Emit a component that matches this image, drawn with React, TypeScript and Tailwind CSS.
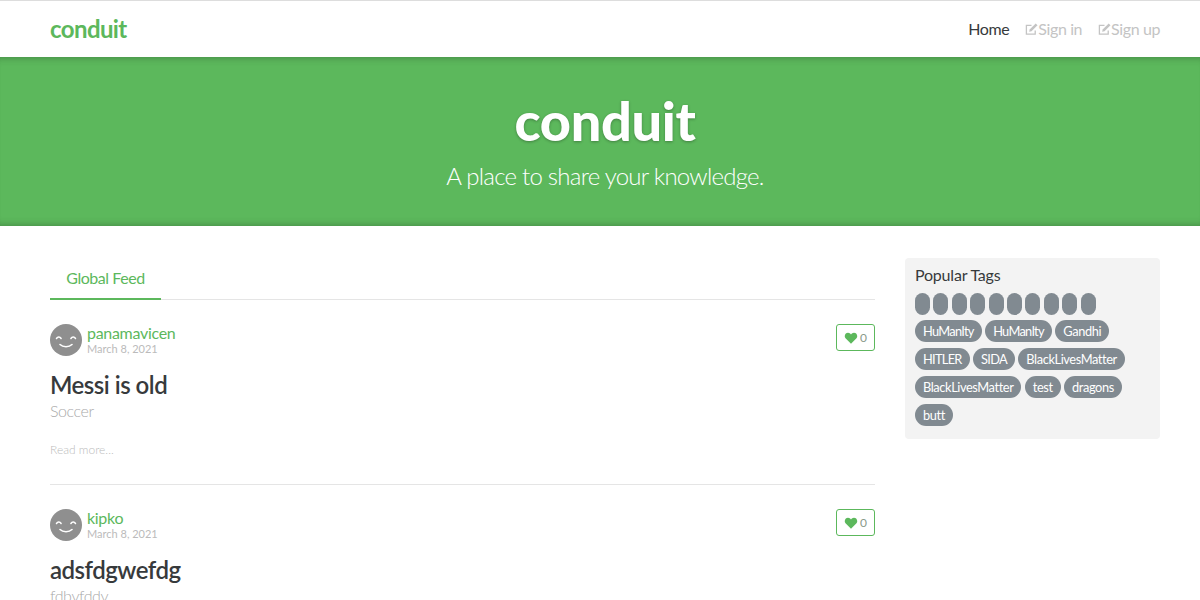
import React from 'react';

const EditIcon = () => (
  <svg viewBox="0 0 14 14" className="w-[13px] h-[13px] shrink-0" fill="none">
    <path d="M11 8v4H1.5V2.5H7" stroke="currentColor" strokeWidth="1.4" />
    <path d="M4.5 9.5l.5-2.5 6.5-6.500 2 2L7 9z" fill="currentColor" />
  </svg>
);

const Avatar = () => (
  <svg viewBox="0 0 32 32" className="w-8 h-8 shrink-0">
    <circle cx="16" cy="16" r="16" fill="#8f8f8f" />
    <path d="M6.500 14.500c1.200-2 3.400-2 4.600 0M20.900 14.500c1.200-2 3.400-2 4.600 0" stroke="#fff" strokeWidth="1.500" fill="none" strokeLinecap="round" />
    <path d="M10 20.500c3 3 9 3 12 0" stroke="#fff" strokeWidth="1.600" fill="none" strokeLinecap="round" />
  </svg>
);

const LikeButton = () => (
  <button className="w-[39px] h-[27px] border border-[#5cb85c] rounded-[3px] flex items-center justify-center gap-[2px] text-[12px]">
    <svg viewBox="0 0 24 24" className="w-[14px] h-[14px]" fill="#5cb85c">
      <path d="M12 22 2.600 12.400C-.2 9.400 1.600 3 7 3c2.200 0 3.800 1.200 5 3 1.200-1.800 2.800-3 5-3 5.400 0 7.200 6.400 4.400 9.400z" />
    </svg>
    <span className="text-[#8a9a8a]">0</span>
  </button>
);

const Article = ({ author, title, about, divider }: { author: string; title: string; about: string; divider?: boolean }) => (
  <div className={`pt-6 pb-[26px] ${divider ? 'border-b border-[#e5e5e5]' : ''}`}>
    <div className="flex items-start justify-between">
      <div className="flex items-center gap-[5px]">
        <Avatar />
        <div className="flex flex-col">
          <span className="text-[16px] leading-[18px] tracking-[-0.3px] text-[#5cb85c]">{author}</span>
          <span className="text-[11px] leading-[14px] text-[#bbbbbb]">March 8, 2021</span>
        </div>
      </div>
      <LikeButton />
    </div>
    <h2 className="mt-[14px] text-[24px] leading-[30px] font-semibold tracking-[-0.5px] text-[#373a3c]">{title}</h2>
    <p className="mt-[1px] text-[16px] leading-[20px] font-light tracking-[-0.4px] text-[#aaaaaa]">{about}</p>
    <div className="mt-[21px] text-[12px] leading-[16px] font-light text-[#bbbbbb]">Read more...</div>
  </div>
);

const tagRows = [
  ['HuManIty', 'HuManIty', 'Gandhi'],
  ['HITLER', 'SIDA', 'BlackLivesMatter'],
  ['BlackLivesMatter', 'test', 'dragons'],
  ['butt'],
];

const tightTags = ['HuManIty', 'HITLER', 'SIDA'];

const Tag = ({ label }: { label: string }) => (
  <span className={`h-[22px] px-2 rounded-full bg-[#818a91] text-white text-[12.800px] leading-[22px] ${tightTags.includes(label) ? 'tracking-[-0.7px]' : 'tracking-[-0.4px]'}`}>{label}</span>
);

export default function App() {
  return (
    <div className="font-['Lato','Noto_Sans',sans-serif] w-[1200px] h-[600px] overflow-hidden bg-white">
      <nav className="h-[57px] border-t border-[#dddddd] pl-[50px] pr-[40px] flex items-center justify-between">
        <span className="text-[24px] font-bold text-[#5cb85c] leading-none tracking-[-0.6px]">conduit</span>
        <div className="flex items-center gap-4 text-[16px] tracking-[-0.4px]">
          <span className="text-[#373a3c]">Home</span>
          <span className="flex items-center text-[#c4c4c4]"><EditIcon />Sign in</span>
          <span className="flex items-center text-[#c4c4c4]"><EditIcon />Sign up</span>
        </div>
      </nav>

      <section className="h-[169px] pl-[10px] bg-[#5cb85c] shadow-[inset_0_8px_8px_-8px_rgba(0,0,0,0.3),inset_0_-8px_8px_-8px_rgba(0,0,0,0.3)] flex flex-col items-center text-white">
        <h1 className="mt-[29px] text-[54px] leading-[70px] font-black tracking-[-0.3px] [text-shadow:0_1px_3px_rgba(0,0,0,0.3)]">conduit</h1>
        <p className="mt-[3px] text-[24px] leading-[34px] font-light tracking-[-0.75px]">A place to share your knowledge.</p>
      </section>

      <main className="pl-[50px] pr-[40px] pt-[32px] flex gap-[30px] items-start">
        <div className="w-[825px] pt-[1px]">
          <div className="border-b border-[#e5e5e5] flex">
            <div className="w-[111px] h-[41px] border-b-2 border-[#5cb85c] -mb-px text-center text-[16px] leading-[38px] tracking-[-0.45px] text-[#5cb85c]">Global Feed</div>
          </div>
          <Article author="panamavicen" title="Messi is old" about="Soccer" divider />
          <Article author="kipko" title="adsfdgwefdg" about="fdbvfddy" />
        </div>

        <aside className="w-[255px] h-[181px] bg-[#f3f3f3] rounded-[4px] px-[10px] pt-[5px]">
          <div className="text-[16px] leading-[24px] tracking-[-0.2px] text-[#373a3c]">Popular Tags</div>
          <div className="mt-[6px] flex gap-[3.400px]">
            {Array.from({ length: 10 }).map((_, i) => (
              <span key={i} className="w-[15px] h-[22px] rounded-full bg-[#818a91]" />
            ))}
          </div>
          <div className="mt-[5px] flex flex-col gap-[6px]">
            {tagRows.map((row, i) => (
              <div key={i} className="flex gap-[3.400px]">
                {row.map((t, j) => <Tag key={j} label={t} />)}
              </div>
            ))}
          </div>
        </aside>
      </main>
    </div>
  );
}
